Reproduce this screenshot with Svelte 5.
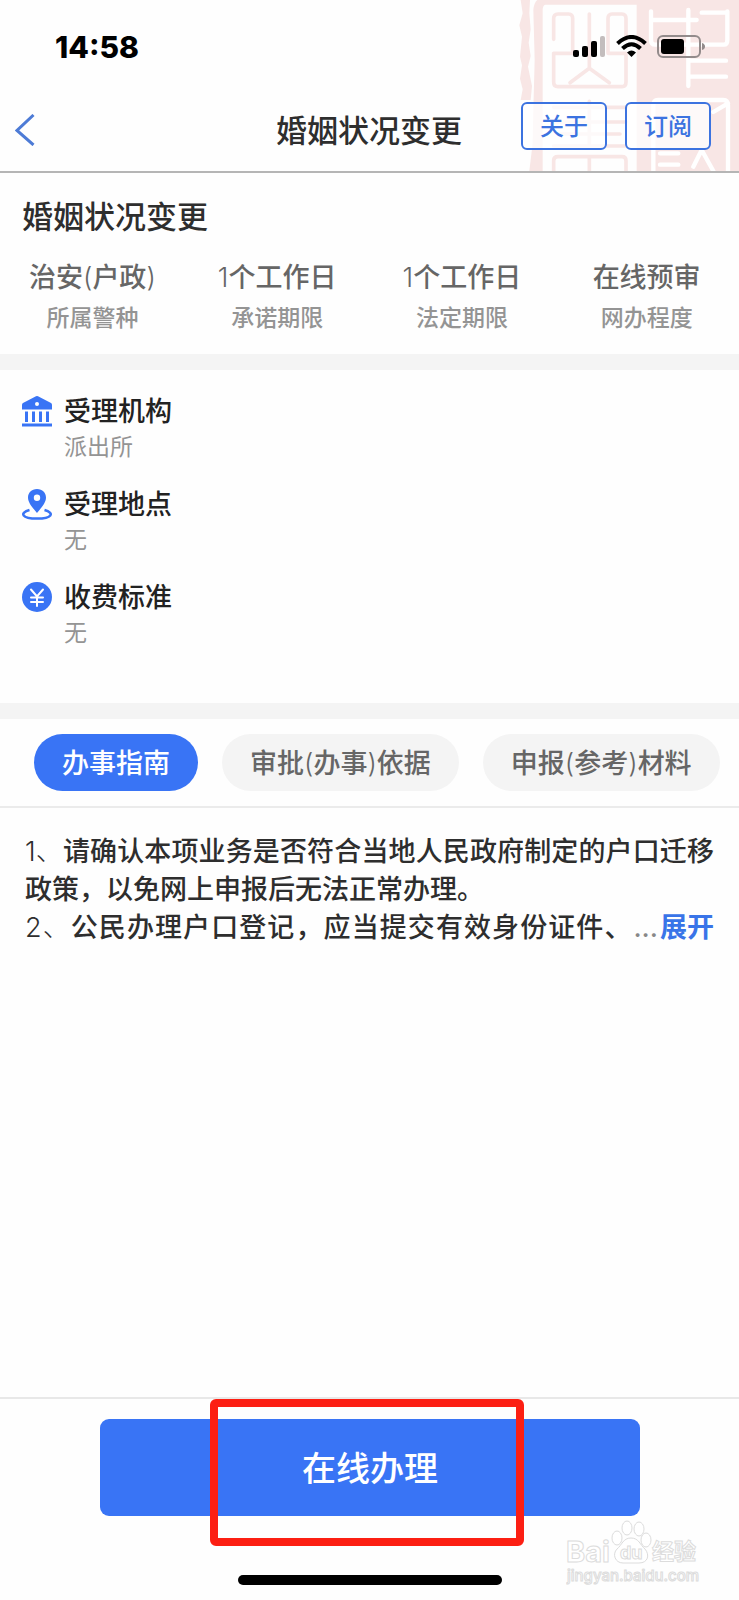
<script>
  const facts = [
    { value: '治安(户政)', label: '所属警种' },
    { value: '1个工作日', label: '承诺期限' },
    { value: '1个工作日', label: '法定期限' },
    { value: '在线预审', label: '网办程度' }
  ];
  const details = [
    { icon: 'bank', title: '受理机构', text: '派出所' },
    { icon: 'pin', title: '受理地点', text: '无' },
    { icon: 'yuan', title: '收费标准', text: '无' }
  ];
  const tabs = ['办事指南', '审批(办事)依据', '申报(参考)材料'];
  let active = $state(0);

  // Digits and brackets are set lighter than the Chinese text around them.
  const parts = (text) => text.split(/([()\d])/).filter(Boolean);
</script>

{#snippet mixed(text)}{#each parts(text) as part}<span class:thin={/[()\d]/.test(part)}>{part}</span>{/each}{/snippet}

<div class="page">
  <header>
    <svg class="seal" viewBox="0 0 717 513" width="239" height="171" fill="none" stroke-linecap="round" stroke-linejoin="round" aria-hidden="true">
      <path fill="#f8e6e5" d="M62 0H90L88 40L92 88L86 128L92 168L84 200L96 258L92 300H62L68 268L60 236L66 196L60 170L66 110L58 76L68 40Z" />
      <path fill="#f8e6e5" d="M112 0H717V513H410V14H136Q128 16 128 30V513H88L98 430L100 330L104 180L100 30Q102 8 112 0Z" />
      <g stroke="#f8e6e5" stroke-width="11">
        <path d="M161 118V56Q161 42 174 42H206Q218 42 218 56V160M268 42V205M324 160V56Q324 42 336 42H366Q378 42 378 56V118M161 160H218M324 160H378M161 160V246Q161 260 174 260H366Q378 260 378 246V160M210 248L268 205L328 248" />
        <path d="M161 322H378M161 366H378M176 402H360M161 438H378M268 304V438M161 513V482Q161 470 174 470H366Q378 470 378 482V513M268 470V513" />
      </g>
      <g stroke="#fff" stroke-width="13">
        <path d="M453 34V120Q453 134 465 134H672Q682 134 682 120V34M453 60H590M565 30V258M605 38H682M570 182H678M570 230H678" />
        <path d="M460 513V316Q460 300 474 300H670Q684 300 684 316V513M640 336L684 310M480 460H535M480 494H535M580 500L605 450L640 513" />
      </g>
    </svg>

    <div class="status">
      <time>14:58</time>
      <svg class="signals" viewBox="0 0 132 24" width="132" height="24" aria-hidden="true">
        <rect x="0" y="15" width="6" height="7" rx="2" />
        <rect x="9" y="11" width="6" height="11" rx="2" />
        <rect x="18" y="6" width="6" height="16" rx="2" />
        <rect x="27" y="1" width="5" height="21" rx="2" fill="#c3bdbd" />
        <g fill="none" stroke="#000" stroke-width="4">
          <path d="M44.500 8.500Q58.500 -4.500 72.500 8.500" />
          <path d="M49.500 13.500Q58.500 5 67.500 13.500" />
        </g>
        <path d="M54 17.500Q58.500 13.500 63 17.500L58.500 22Z" />
        <rect x="85" y="1" width="42" height="21" rx="5" fill="none" stroke="#938b8b" stroke-width="2" />
        <rect x="88" y="4" width="23" height="15" rx="3" />
        <path d="M129 8Q132 9 132 11.500Q132 14 129 15Z" fill="#938b8b" />
      </svg>
    </div>

    <nav>
      <button class="back" aria-label="返回">
        <svg viewBox="0 0 20 32" width="20" height="32" fill="none" stroke="#4d7bd6" stroke-width="3"><path d="M18.500 1L2 16.500L18.500 31" /></svg>
      </button>
      <h1>婚姻状况变更</h1>
      <div class="actions">
        <button>关于</button>
        <button>订阅</button>
      </div>
    </nav>
  </header>

  <section class="summary">
    <h2>婚姻状况变更</h2>
    <dl>
      {#each facts as fact}
        <div>
          <dt>{fact.label}</dt>
          <dd>{@render mixed(fact.value)}</dd>
        </div>
      {/each}
    </dl>
  </section>

  <section class="details">
    {#each details as item}
      <div class="detail">
        <svg viewBox="0 0 30 32" width="30" height="32" fill="#3974f5" aria-hidden="true">
          {#if item.icon === 'bank'}
            <path fill-rule="evenodd" d="M14 .3Q15 -.3 16 .3L29 7Q30 7.500 30 9V13.500H0V9Q0 7.500 1 7ZM15 6A2 2 0 1 0 15 10A2 2 0 1 0 15 6Z" />
            <path d="M3 15.500H6V26H3ZM10 15.500H13V26H10ZM17 15.500H20V26H17ZM24 15.500H27V26H24ZM0 27.500H30V30.500H0Z" />
          {:else if item.icon === 'pin'}
            <path fill-rule="evenodd" d="M15 0C9.500 0 6 4 6 8.500C6 14 11 19 15 24C19 19 24 14 24 8.500C24 4 20.500 0 15 0ZM15 5.500A3.200 3.200 0 1 1 15 11.900A3.200 3.200 0 1 1 15 5.500Z" />
            <path d="M7.500 21C-3 24 0 29.500 15 29.500S33 24 22.500 21" fill="none" stroke="#3974f5" stroke-width="2.500" />
          {:else}
            <circle cx="15" cy="15" r="15" />
            <path d="M9 7.500L15 14.500L21 7.500M15 14.500V24M9 15.500H21M9 20H21" fill="none" stroke="#fff" stroke-width="2" stroke-linecap="round" />
          {/if}
        </svg>
        <div>
          <h3>{item.title}</h3>
          <p>{item.text}</p>
        </div>
      </div>
    {/each}
  </section>

  <div class="tabs" role="tablist">
    {#each tabs as tab, i}
      <button role="tab" aria-selected={active === i} class:active={active === i} onclick={() => (active = i)}>{@render mixed(tab)}</button>
    {/each}
  </div>

  <section class="guide">
    <p>1、请确认本项业务是否符合当地人民政府制定的户口迁移政策，以免网上申报后无法正常办理。</p>
    <div class="clipped">
      <p>2、公民办理户口登记，应当提交有效身份证件、</p>
      <span class="dots">...</span>
      <button>展开</button>
    </div>
  </section>

  <footer>
    <div class="submit">
      <button>在线办理</button>
      <div class="highlight"></div>
    </div>
    <div class="home"></div>
    <div class="watermark">
      <svg viewBox="0 0 136 66" width="136" height="66" fill="#fff" stroke="#dcdcdc" stroke-width="1" aria-hidden="true">
        <g font-family="Inter, sans-serif" font-weight="700">
          <text x="0" y="42" font-size="29">Bai</text>
          <ellipse cx="51" cy="18" rx="5" ry="7" />
          <ellipse cx="61" cy="8" rx="5" ry="7" />
          <ellipse cx="73" cy="9" rx="5" ry="7" />
          <ellipse cx="80" cy="20" rx="5" ry="7" />
          <path d="M65 18C57 18 56 25 51 29C46 34 49 43 57 43H73C82 43 84 35 79 29C74 25 73 18 65 18Z" />
          <text x="54" y="39" font-size="18">du</text>
        </g>
        <text x="86" y="39" font-size="22" font-weight="700" font-family="Noto Sans CJK SC, sans-serif">经验</text>
        <text x="1" y="61" font-size="15" font-family="Inter, sans-serif" font-weight="500">jingyan.baidu.com</text>
      </svg>
    </div>
  </footer>
</div>

<style>
  :global(body) { margin: 0; background: #fefefe; }
  .page {
    min-height: 100vh;
    display: flex;
    flex-direction: column;
    color: #2e2e2e;
    font-family: Inter, 'Noto Sans CJK SC', sans-serif;
    font-weight: 500;
  }
  h1, h2, h3, p, dl, dd { margin: 0; font-weight: 500; }
  button {
    border: 0;
    padding: 0;
    background: none;
    font: inherit;
    color: inherit;
    cursor: pointer;
  }
  .thin { font-weight: 300; }

  header { position: relative; border-bottom: 2px solid #b5b5b5; }
  .seal { position: absolute; top: 0; right: 0; }
  .status {
    position: relative;
    display: flex;
    justify-content: space-between;
    align-items: center;
    height: 94px;
    padding: 0 34px 0 55px;
  }
  time { color: #000; font-size: 30px; font-weight: 800; }
  nav {
    position: relative;
    display: grid;
    grid-template-columns: 1fr auto 1fr;
    align-items: center;
    height: 77px;
    padding: 0 28px 0 15px;
    box-sizing: border-box;
  }
  .back { justify-self: start; display: flex; padding-bottom: 6px; }
  h1 { font-size: 31px; line-height: 40px; padding-bottom: 4px; margin-right: -12px; }
  .actions { display: flex; gap: 18px; justify-self: end; padding-bottom: 14px; }
  .actions button {
    width: 86px;
    height: 48px;
    padding-bottom: 2px;
    border: 2px solid #3c73e0;
    border-radius: 6px;
    background: rgb(255 255 255 / 75%);
    color: #3c73e0;
    font-size: 24px;
  }

  .summary { padding: 24px 0 16px; border-bottom: 16px solid #f4f4f4; }
  h2 { padding: 0 22px; font-size: 31px; line-height: 40px; }
  dl { display: grid; grid-template-columns: repeat(4, 1fr); margin: 21px 0 0; text-align: center; }
  dl div { display: flex; flex-direction: column-reverse; }
  dd { color: #666; font-size: 27px; line-height: 40px; }
  dt { color: #949494; font-size: 23px; line-height: 40px; }

  .details {
    display: flex;
    flex-direction: column;
    gap: 23px;
    padding: 24px 22px 53px;
    border-bottom: 16px solid #f4f4f4;
  }
  .detail { display: flex; gap: 12px; }
  .detail svg { flex: none; margin-top: 2px; }
  h3 { color: #222; font-size: 27px; line-height: 36px; }
  .detail p { color: #949494; font-size: 23px; line-height: 34px; font-weight: 400; }

  .tabs {
    display: flex;
    gap: 24px;
    padding: 15px 0 15px 34px;
    border-bottom: 2px solid #ebebeb;
    overflow: hidden;
  }
  .tabs button {
    flex: none;
    height: 57px;
    padding: 0 28px 2px;
    border-radius: 29px;
    background: #f4f4f4;
    color: #666;
    font-size: 27px;
  }
  .tabs button.active { background: #3974f5; color: #fff; }

  .guide { padding: 25px; font-size: 27px; line-height: 38px; }
  .guide > p { text-align: justify; }
  .guide p::first-letter { font-weight: 300; }
  .clipped { display: flex; }
  .clipped p { flex: 1; text-align-last: justify; }
  .dots { color: #888; padding: 0 2px; }
  .clipped button { color: #3974e8; font-weight: 700; }

  footer {
    position: relative;
    margin-top: auto;
    padding: 20px 99px 15px 100px;
    border-top: 2px solid #e8e8e8;
  }
  .submit { position: relative; }
  .submit button {
    display: block;
    width: 100%;
    height: 97px;
    padding-bottom: 3px;
    border-radius: 9px;
    background: #3974f5;
    color: #fff;
    font-size: 34px;
  }
  .highlight {
    position: absolute;
    inset: -20px 116px -30px 110px;
    border: 8px solid #fc1f13;
    border-radius: 6px;
    pointer-events: none;
  }
  .home { width: 264px; height: 10px; margin: 59px auto 0; border-radius: 5px; background: #000; }
  .watermark { position: absolute; right: 37px; bottom: 14px; height: 66px; }
</style>
